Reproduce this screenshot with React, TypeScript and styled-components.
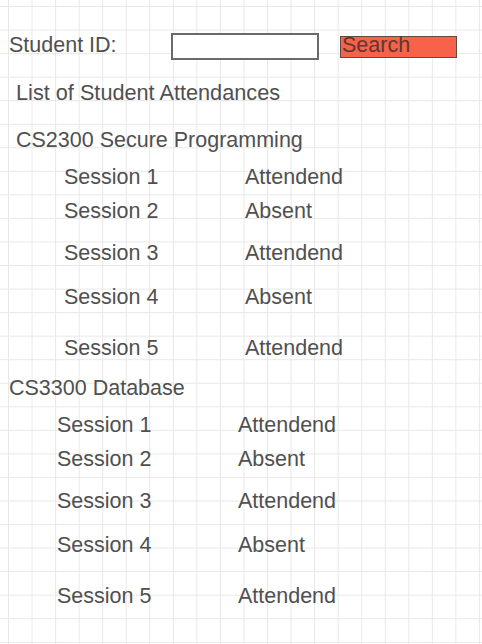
import styled, { createGlobalStyle } from "styled-components";

type Session = { name: string; status: string; gap: number };
type Course = { title: string; sessions: Session[] };

const GAPS = [13, 10, 18, 20, 27];
const STATUSES = ["Attendend", "Absent", "Attendend", "Absent", "Attendend"];

const makeSessions = (): Session[] =>
  STATUSES.map((status, i) => ({
    name: `Session ${i + 1}`,
    status,
    gap: GAPS[i],
  }));

const courses: Course[] = [
  { title: "CS2300 Secure Programming", sessions: makeSessions() },
  { title: "CS3300 Database", sessions: makeSessions() },
];

const App = () => {
  return (
    <Page>
      <GlobalStyle />
      <SearchBar>
        <Label htmlFor="student-id">Student ID:</Label>
        <IdInput id="student-id" type="text" />
        <SearchBtn>Search</SearchBtn>
      </SearchBar>
      <Heading>List of Student Attendances</Heading>
      {courses.map((course, idx) => (
        <CourseBlock key={course.title} $indent={idx === 0 ? 16 : 9} $first={idx === 0}>
          <CourseTitle>{course.title}</CourseTitle>
          {course.sessions.map((s) => (
            <SessionRow key={s.name} $gap={s.gap}>
              <SessionName>{s.name}</SessionName>
              <Status>{s.status}</Status>
            </SessionRow>
          ))}
        </CourseBlock>
      ))}
    </Page>
  );
};

const GlobalStyle = createGlobalStyle`
  body {
    margin: 0;
    background: #ffffff;
  }
`;

const Page = styled.div`
  min-height: 644px;
  box-sizing: border-box;
  padding-top: 33px;
  font-family: "Liberation Sans", Arial, sans-serif;
  font-size: 21.5px;
  line-height: 24px;
  color: #505050;
  background-color: #ffffff;
  background-image: linear-gradient(to right, #e8e8e8 1px, transparent 1px),
    linear-gradient(to bottom, #e8e8e8 1px, transparent 1px);
  background-size: 23.55px 23.55px;
  background-position: 8px 6px;
`;

const SearchBar = styled.div`
  display: flex;
  align-items: flex-start;
  padding-left: 9px;
`;

const Label = styled.label`
  width: 162px;
`;

const IdInput = styled.input`
  box-sizing: border-box;
  width: 148px;
  height: 27px;
  margin: 0;
  border: 2px solid #6a6a6a;
  background: #ffffff;
  outline: none;
`;

const SearchBtn = styled.button`
  display: flex;
  align-items: flex-start;
  box-sizing: border-box;
  width: 117px;
  height: 22px;
  margin: 3px 0 0 21px;
  padding: 0 0 0 1px;
  border: 1px solid #5e4a45;
  background: #f8614a;
  color: #5b3a31;
  font-family: inherit;
  font-size: 21.5px;
  line-height: 16px;
  cursor: pointer;
`;

const Heading = styled.div`
  margin-top: 21px;
  padding-left: 16px;
  font-size: 21.7px;
`;

const CourseBlock = styled.section<{ $indent: number; $first: boolean }>`
  margin-top: ${(p) => (p.$first ? 23 : 16)}px;
  padding-left: ${(p) => p.$indent}px;
`;

const CourseTitle = styled.div``;

const SessionRow = styled.div<{ $gap: number }>`
  display: flex;
  margin-top: ${(p) => p.$gap}px;
  padding-left: 48px;
`;

const SessionName = styled.span`
  width: 181px;
`;

const Status = styled.span``;

export default App;
